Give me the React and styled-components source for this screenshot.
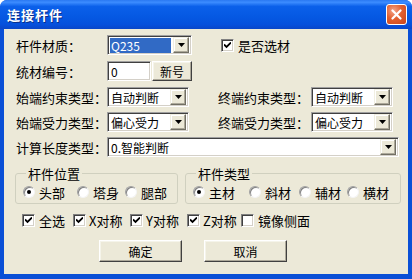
import React from "react";
import styled, { createGlobalStyle } from "styled-components";

const Global = createGlobalStyle`
  html, body { margin: 0; padding: 0; background: #ffffff; }
  body { font-family: "Liberation Sans", "Noto Sans CJK SC", sans-serif; font-size: 12px; }
`;

const FONT = `"Liberation Sans", "Noto Sans CJK SC", sans-serif`;

// Window frame
const Window = styled.div`
  width: 412px;
  height: 279px;
  display: flex;
  flex-direction: column;
  background: #0a4fd6;
  border-radius: 7px 7px 0 0;
  overflow: hidden;
  box-sizing: border-box;
`;

const TitleBar = styled.div`
  height: 29px;
  flex-shrink: 0;
  display: flex;
  align-items: center;
  justify-content: space-between;
  padding: 0 5px 0 7px;
  background: linear-gradient(
    to bottom,
    #2a78f2 0%,
    #3c8cff 8%,
    #0b60ea 22%,
    #0558e2 60%,
    #0650dc 85%,
    #0a46c8 100%
  );
`;

const Title = styled.span`
  color: #ffffff;
  font-family: "Noto Sans CJK SC", sans-serif;
  font-weight: 700;
  font-size: 13px;
  letter-spacing: 1px;
  text-shadow: 1px 1px 0 #0a2f8a;
`;

const CloseButton = styled.div`
  width: 21px;
  height: 21px;
  box-sizing: border-box;
  border: 1px solid #ffffff;
  border-radius: 3px;
  background: radial-gradient(circle at 35% 30%, #f3a48a 0%, #e3602f 45%, #c8431a 100%);
  display: flex;
  align-items: center;
  justify-content: center;
`;

const Client = styled.div`
  flex: 1;
  margin: 0 4px 5px 4px;
  background: #ece9d8;
  padding: 6px 0 0 12px;
  display: flex;
  flex-direction: column;
  font-family: ${FONT};
  font-size: 12px;
  color: #000000;
`;

const Row = styled.div`
  display: flex;
  align-items: center;
  height: 20px;
  margin-top: ${(p) => p.$top || 0}px;
`;

const Label = styled.span`
  width: ${(p) => p.$w || 91}px;
  margin-left: ${(p) => p.$left || 0}px;
  flex-shrink: 0;
  white-space: nowrap;
  font-family: "Noto Sans CJK SC", sans-serif;
  font-size: 13px;
`;

// Sunken field (classic 3D)
const Field = styled.div`
  width: ${(p) => p.$w}px;
  height: 20px;
  box-sizing: border-box;
  background: #ffffff;
  border-style: solid;
  border-width: 1px;
  border-color: #a0a0a0 #ffffff #ffffff #a0a0a0;
  box-shadow: inset 1px 1px 0 #404040, inset -1px -1px 0 #d4d0c8;
  display: flex;
  align-items: center;
  padding: 2px;
  flex-shrink: 0;
`;

const FieldText = styled.span`
  flex: 1;
  height: 15px;
  line-height: 15px;
  padding-left: 1px;
  white-space: nowrap;
  overflow: hidden;
  font-family: "Noto Sans CJK SC", sans-serif;
  font-size: 12px;
  color: ${(p) => (p.$selected ? "#ffffff" : "#000000")};
  background: ${(p) => (p.$selected ? "#316ac5" : "transparent")};
  margin-right: ${(p) => (p.$selected ? 2 : 0)}px;
`;

const DropButton = styled.div`
  width: 16px;
  height: 16px;
  box-sizing: border-box;
  background: #ece9d8;
  border-style: solid;
  border-width: 1px;
  border-color: #f1efe2 #716f64 #716f64 #f1efe2;
  box-shadow: inset -1px -1px 0 #aca899, inset 1px 1px 0 #ffffff;
  display: flex;
  align-items: center;
  justify-content: center;
  flex-shrink: 0;
`;

const Arrow = () => (
  <svg width="7" height="4" viewBox="0 0 7 4">
    <path d="M0 0H7L3.5 4Z" fill="#000" />
  </svg>
);

const Combo = ({ w, text, selected }) => (
  <Field $w={w}>
    <FieldText $selected={selected}>{text}</FieldText>
    <DropButton>
      <Arrow />
    </DropButton>
  </Field>
);

const PushButton = styled.div`
  width: ${(p) => p.$w}px;
  height: ${(p) => p.$h || 22}px;
  margin-left: ${(p) => p.$left || 0}px;
  box-sizing: border-box;
  background: #ece9d8;
  border-style: solid;
  border-width: 1px;
  border-color: #ffffff #404040 #404040 #ffffff;
  box-shadow: inset -1px -1px 0 #aca899, inset 1px 1px 0 #f5f4ea;
  display: flex;
  align-items: center;
  justify-content: center;
  font-family: "Noto Sans CJK SC", sans-serif;
  font-size: 12px;
  flex-shrink: 0;
`;

// Check boxes and radio buttons
const CheckItem = styled.div`
  display: flex;
  align-items: center;
  gap: ${(p) => p.$gap || 4}px;
  width: ${(p) => (p.$w ? `${p.$w}px` : "auto")};
  margin-left: ${(p) => p.$left || 0}px;
  flex-shrink: 0;
  white-space: nowrap;
  font-family: "Noto Sans CJK SC", sans-serif;
  font-size: 13px;
`;

const Box = styled.div`
  width: 13px;
  height: 13px;
  box-sizing: border-box;
  background: #ffffff;
  border-style: solid;
  border-width: 1px;
  border-color: #808080 #ffffff #ffffff #808080;
  box-shadow: inset 1px 1px 0 #404040, inset -1px -1px 0 #d4d0c8;
  display: flex;
  align-items: center;
  justify-content: center;
  flex-shrink: 0;
`;

const Tick = () => (
  <svg width="7" height="7" viewBox="0 0 7 7">
    <path d="M0 2.5L2.5 5L7 0.5" stroke="#000" strokeWidth="1.8" fill="none" />
  </svg>
);

const Check = ({ checked, label, w, left, gap }) => (
  <CheckItem $w={w} $left={left} $gap={gap}>
    <Box>{checked && <Tick />}</Box>
    <span>{label}</span>
  </CheckItem>
);

const RadioCircle = styled.div`
  width: 12px;
  height: 12px;
  box-sizing: border-box;
  border-radius: 50%;
  background: #ffffff;
  border-style: solid;
  border-width: 1px;
  border-color: #a0a0a0 #f4f4f4 #f4f4f4 #a0a0a0;
  box-shadow: inset 1px 1px 0 #808080;
  display: flex;
  align-items: center;
  justify-content: center;
  flex-shrink: 0;
`;

const Dot = styled.div`
  width: 4px;
  height: 4px;
  border-radius: 50%;
  background: #000000;
`;

const Radio = ({ checked, label, w }) => (
  <CheckItem $w={w}>
    <RadioCircle>{checked && <Dot />}</RadioCircle>
    <span>{label}</span>
  </CheckItem>
);

const GroupRow = styled.div`
  display: flex;
  gap: 7px;
  margin-top: 9px;
  margin-left: -1px;
`;

const Group = styled.fieldset`
  width: ${(p) => p.$w}px;
  height: 38px;
  box-sizing: border-box;
  margin: 0;
  padding: 0 0 0 7px;
  border: 1px solid #d0d0bf;
  border-radius: 3px;
  display: flex;
  align-items: center;
`;

const Legend = styled.legend`
  padding: 0 2px;
  margin-left: 3px;
  font-family: "Noto Sans CJK SC", sans-serif;
  font-size: 13px;
  line-height: 15px;
`;

const GroupInner = styled.div`
  display: flex;
  align-items: center;
`;

const CheckRow = styled.div`
  display: flex;
  align-items: center;
  height: 14px;
  margin-top: 9px;
  padding-left: 6px;
`;

const ButtonRow = styled.div`
  display: flex;
  margin-top: 13px;
  padding-left: 83px;
`;

export default function App() {
  return (
    <>
      <Global />
      <Window>
        <TitleBar>
          <Title>连接杆件</Title>
          <CloseButton>
            <svg width="11" height="11" viewBox="0 0 11 11">
              <path d="M1.5 1.5L9.5 9.5M9.5 1.5L1.5 9.5" stroke="#fff" strokeWidth="2.2" strokeLinecap="round" />
            </svg>
          </CloseButton>
        </TitleBar>
        <Client>
          <Row>
            <Label>杆件材质：</Label>
            <Combo w={85} text="Q235" selected />
            <Check checked label="是否选材" left={29} />
          </Row>
          <Row $top={6}>
            <Label>统材编号：</Label>
            <Field $w={44}>
              <FieldText>0</FieldText>
            </Field>
            <PushButton $w={40} $h={20} $left={1}>新号</PushButton>
          </Row>
          <Row $top={6}>
            <Label>始端约束类型：</Label>
            <Combo w={82} text="自动判断" />
            <Label $left={29} $w={93}>终端约束类型：</Label>
            <Combo w={82} text="自动判断" />
          </Row>
          <Row $top={5}>
            <Label>始端受力类型：</Label>
            <Combo w={82} text="偏心受力" />
            <Label $left={29} $w={93}>终端受力类型：</Label>
            <Combo w={82} text="偏心受力" />
          </Row>
          <Row $top={5}>
            <Label>计算长度类型：</Label>
            <Combo w={292} text="0.智能判断" />
          </Row>
          <GroupRow>
            <Group $w={163}>
              <Legend>杆件位置</Legend>
              <GroupInner>
                <Radio checked label="头部" w={54} />
                <Radio label="塔身" w={48} />
                <Radio label="腿部" />
              </GroupInner>
            </Group>
            <Group $w={216}>
              <Legend>杆件类型</Legend>
              <GroupInner>
                <Radio checked label="主材" w={56} />
                <Radio label="斜材" w={50} />
                <Radio label="辅材" w={48} />
                <Radio label="横材" />
              </GroupInner>
            </Group>
          </GroupRow>
          <CheckRow>
            <Check checked label="全选" w={51} />
            <Check checked label="X对称" w={57} gap={3} />
            <Check checked label="Y对称" w={57} gap={3} />
            <Check checked label="Z对称" w={54} gap={3} />
            <Check label="镜像侧面" />
          </CheckRow>
          <ButtonRow>
            <PushButton $w={83}>确定</PushButton>
            <PushButton $w={83} $left={22}>取消</PushButton>
          </ButtonRow>
        </Client>
      </Window>
    </>
  );
}
